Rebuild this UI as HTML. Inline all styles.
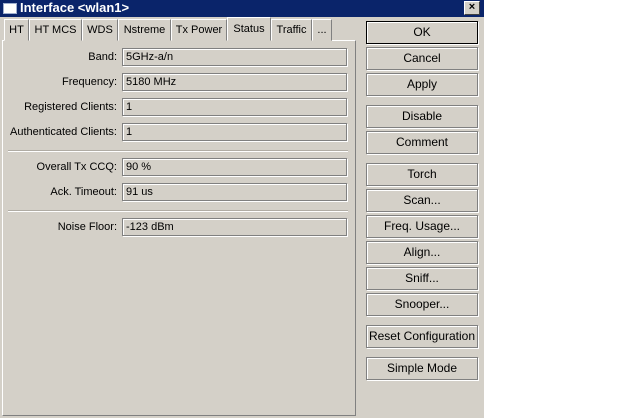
<!DOCTYPE html>
<html><head><style>
*{margin:0;padding:0;box-sizing:border-box}
body{width:640px;height:418px;background:#fff;font-family:"Liberation Sans",sans-serif;font-size:11px;color:#000;position:relative;overflow:hidden}
.win{position:absolute;left:0;top:0;width:484px;height:418px;background:#d4d0c8;overflow:hidden}
.title{position:absolute;left:0;top:0;width:484px;height:17px;background:#0a246a;color:#fff;font-weight:bold;font-size:13px;line-height:16px;padding-left:20px}
.ticon{position:absolute;left:3px;top:3px;width:14px;height:11px;background:#fff;border:1px solid #a0b0d0}
.close{position:absolute;left:464px;top:1px;width:16px;height:14px;background:#d4d0c8;border:1px solid;border-color:#fff #404040 #404040 #fff;color:#000;font-size:11px;line-height:11px;text-align:center;font-weight:bold}
.tab{position:absolute;top:19px;height:22px;border:1px solid;border-color:#fff #808080 #d4d0c8 #fff;line-height:20px;text-align:center;background:#d4d0c8}
.tab.sel{top:17px;height:24px;z-index:2}
.panel{position:absolute;left:2px;top:40px;width:354px;height:376px;border:1px solid;border-color:#fff #808080 #808080 #fff}
.lbl{position:absolute;right:367px;text-align:right;line-height:17px;white-space:nowrap}
.fld{position:absolute;left:122px;width:225px;height:18px;border:1px solid #808080;background:#d4d0c8;box-shadow:inset 1px 1px 0 #fff,1px 1px 0 #fff;line-height:16px;padding-left:3px}
.sep{position:absolute;left:8px;width:340px;height:2px;border-top:1px solid #b0aca4;border-bottom:1px solid #fff}
.btn{position:absolute;left:366px;width:112px;height:23px;border:1px solid #808080;box-shadow:inset 1px 1px 0 #fff,1px 1px 0 #fff;text-align:center;line-height:21px;font-size:12px}
</style></head><body>
<div class="win">
<div class="title"><div class="ticon"></div>Interface &lt;wlan1&gt;<div class="close">×</div></div>
<div class="panel"></div>
<div class="tab" style="left:4px;width:25px">HT</div>
<div class="tab" style="left:29px;width:53px">HT MCS</div>
<div class="tab" style="left:82px;width:36px">WDS</div>
<div class="tab" style="left:118px;width:53px">Nstreme</div>
<div class="tab" style="left:171px;width:56px">Tx Power</div>
<div class="tab sel" style="left:227px;width:44px;line-height:22px">Status</div>
<div class="tab" style="left:271px;width:41px">Traffic</div>
<div class="tab" style="left:312px;width:20px">...</div>

<div class="lbl" style="top:49px">Band:</div><div class="fld" style="top:48px">5GHz-a/n</div>
<div class="lbl" style="top:74px">Frequency:</div><div class="fld" style="top:73px">5180 MHz</div>
<div class="lbl" style="top:99px">Registered Clients:</div><div class="fld" style="top:98px">1</div>
<div class="lbl" style="top:124px">Authenticated Clients:</div><div class="fld" style="top:123px">1</div>
<div class="sep" style="top:150px"></div>
<div class="lbl" style="top:159px">Overall Tx CCQ:</div><div class="fld" style="top:158px">90 %</div>
<div class="lbl" style="top:184px">Ack. Timeout:</div><div class="fld" style="top:183px">91 us</div>
<div class="sep" style="top:210px"></div>
<div class="lbl" style="top:219px">Noise Floor:</div><div class="fld" style="top:218px">-123 dBm</div>

<div class="btn" style="top:21px;border-color:#000">OK</div>
<div class="btn" style="top:47px">Cancel</div>
<div class="btn" style="top:73px">Apply</div>
<div class="btn" style="top:105px">Disable</div>
<div class="btn" style="top:131px">Comment</div>
<div class="btn" style="top:163px">Torch</div>
<div class="btn" style="top:189px">Scan...</div>
<div class="btn" style="top:215px">Freq. Usage...</div>
<div class="btn" style="top:241px">Align...</div>
<div class="btn" style="top:267px">Sniff...</div>
<div class="btn" style="top:293px">Snooper...</div>
<div class="btn" style="top:325px">Reset Configuration</div>
<div class="btn" style="top:357px">Simple Mode</div>
</div>
</body></html>
